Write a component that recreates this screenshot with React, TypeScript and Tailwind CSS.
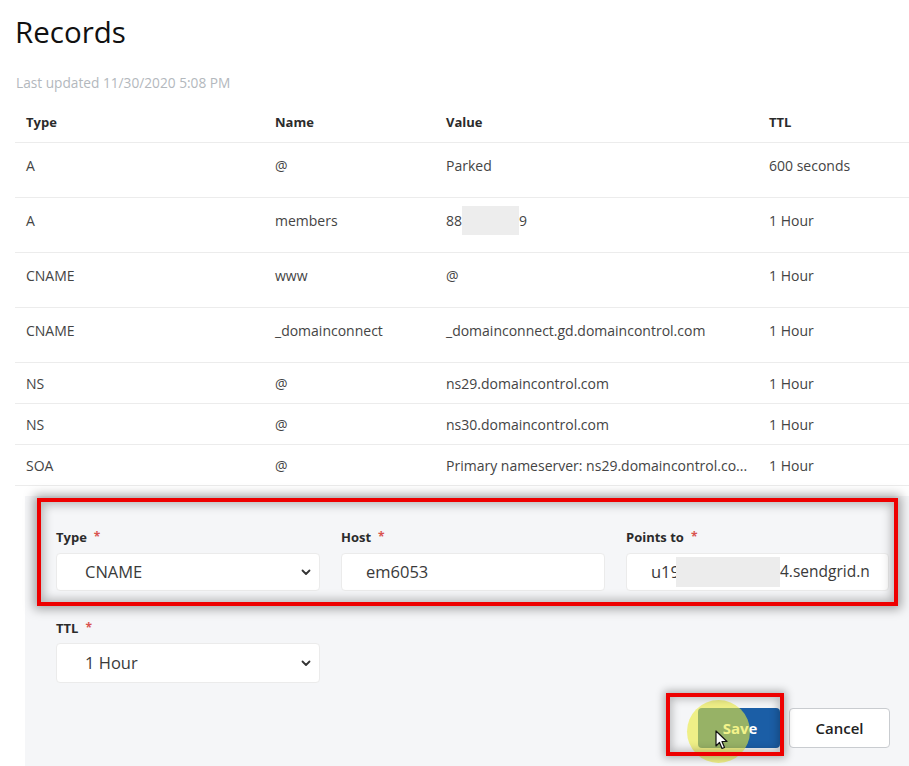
import React from "react";

const font = { fontFamily: '"Open Sans", "Noto Sans", Arial, sans-serif' };

type Row = { type: string; name: string; value: React.ReactNode; ttl: string; tall: boolean };

const rows: Row[] = [
  { type: "A", name: "@", value: "Parked", ttl: "600 seconds", tall: true },
  {
    type: "A",
    name: "members",
    value: (
      <span className="inline-flex items-center">
        88
        <span className="inline-block w-[57px] h-[29px] bg-[#ededed]" />
        9
      </span>
    ),
    ttl: "1 Hour",
    tall: true,
  },
  { type: "CNAME", name: "www", value: "@", ttl: "1 Hour", tall: true },
  { type: "CNAME", name: "_domainconnect", value: "_domainconnect.gd.domaincontrol.com", ttl: "1 Hour", tall: true },
  { type: "NS", name: "@", value: "ns29.domaincontrol.com", ttl: "1 Hour", tall: false },
  { type: "NS", name: "@", value: "ns30.domaincontrol.com", ttl: "1 Hour", tall: false },
  { type: "SOA", name: "@", value: "Primary nameserver: ns29.domaincontrol.co...", ttl: "1 Hour", tall: false },
];

function Chevron() {
  return (
    <svg width="10" height="7" viewBox="0 0 10 7" className="shrink-0">
      <path d="M1.5 1.5 L5 5 L8.5 1.5" fill="none" stroke="#333" strokeWidth="1.8" strokeLinecap="round" strokeLinejoin="round" />
    </svg>
  );
}

function Label({ text }: { text: string }) {
  return (
    <div className="h-4 flex items-center text-[13px] font-bold text-[#2b2b2b] leading-4">
      {text}
      <span className="ml-[7px] text-[#d9534f] text-[12px] font-bold">*</span>
    </div>
  );
}

function Field({ children, select, h = "h-[38px]" }: { children: React.ReactNode; select?: boolean; h?: string }) {
  return (
    <div
      className={
        h +
        " bg-white rounded-[4px] border border-[#ebebeb] flex items-center text-[16.5px] text-[#3a3a3a] " +
        (select ? "pl-[28px] pr-[8px]" : "pl-[24px] pr-[10px]")
      }
    >
      <div className="flex-1 flex items-center whitespace-nowrap">{children}</div>
      {select && <Chevron />}
    </div>
  );
}

export default function App() {
  return (
    <div className="w-[909px] h-[766px] bg-white relative overflow-hidden" style={font}>
      <h1 className="pl-[15px] pt-[12px] text-[29.5px] leading-[40px] text-[#111] font-normal">Records</h1>
      <div className="pl-[16px] mt-[23px] text-[13.7px] leading-4 text-[#b3b8bd]">Last updated 11/30/2020 5:08 PM</div>

      <div className="ml-[15px] mt-[13px]">
        <div className="flex h-[39px] items-center border-b border-[#ececec] text-[13px] font-bold text-[#2b2b2b]">
          <div className="w-[249px] pl-[11px]">Type</div>
          <div className="w-[171px] pl-[11px]">Name</div>
          <div className="w-[323px] pl-[11px]">Value</div>
          <div className="flex-1 pl-[11px]">TTL</div>
        </div>
        {rows.map((r, i) => (
          <div
            key={i}
            className={
              "flex border-b border-[#ececec] text-[14px] text-[#444] " +
              (r.tall ? "h-[55px] items-start pt-[12px]" : "h-[41px] items-center")
            }
          >
            <div className="w-[249px] pl-[11px] h-[20px] flex items-center">{r.type}</div>
            <div className="w-[171px] pl-[11px] h-[20px] flex items-center">{r.name}</div>
            <div className="w-[323px] pl-[11px] h-[20px] flex items-center whitespace-nowrap">{r.value}</div>
            <div className="flex-1 pl-[11px] h-[20px] flex items-center">{r.ttl}</div>
          </div>
        ))}
      </div>

      <div className="ml-[25px] mt-[10px] h-[280px] bg-[#f5f6f8] pl-[31px] pr-[20px] pt-[33px]">
        <div className="grid grid-cols-[264px_264px_263px] gap-x-[21px]">
          <div>
            <Label text="Type" />
            <div className="mt-[8px]">
              <Field select>CNAME</Field>
            </div>
          </div>
          <div>
            <Label text="Host" />
            <div className="mt-[8px]">
              <Field>em6053</Field>
            </div>
          </div>
          <div>
            <Label text="Points to" />
            <div className="mt-[8px]">
              <Field>
                u19
                <span className="relative inline-block shrink-0 w-[104px] h-[30px] bg-[#ececec] ml-[-4px]" />
                <span className="text-[15.5px]">4.sendgrid.n</span>
              </Field>
            </div>
          </div>
        </div>
        <div className="mt-[29px] w-[264px]">
          <Label text="TTL" />
          <div className="mt-[7px]">
            <Field select h="h-[40px]">1 Hour</Field>
          </div>
        </div>
        <div className="flex justify-end gap-[9px] mt-[25px]">
          <button className="w-[82px] h-[40px] rounded-[4px] bg-[#1b5ea6] text-white text-[15px] font-bold flex items-center justify-center pl-[2px]">
            Save
          </button>
          <button className="w-[101px] h-[40px] rounded-[4px] bg-white border border-[#c9ccd0] text-[#222] text-[15px] font-semibold flex items-center justify-center mr-[-1px]">
            Cancel
          </button>
        </div>
      </div>

      {/* annotations */}
      <div className="absolute left-[37px] top-[498px] w-[861px] h-[108px] border-[4px] border-[#ee0000] shadow-[0_0_10px_3px_rgba(0,0,0,0.35),inset_0_0_10px_3px_rgba(0,0,0,0.25)] pointer-events-none" />
      <div className="absolute left-[687px] top-[700px] w-[63px] h-[63px] rounded-full bg-[rgba(235,235,60,0.6)] pointer-events-none" />
      <div className="absolute left-[666px] top-[693px] w-[118px] h-[63px] border-[4px] border-[#ee0000] shadow-[0_0_8px_2px_rgba(0,0,0,0.3),inset_0_0_8px_2px_rgba(0,0,0,0.25)] pointer-events-none" />
      <svg className="absolute left-[715px] top-[730px] pointer-events-none" width="14" height="21" viewBox="0 0 14 21">
        <path d="M1 1 L1 16 L4.5 12.5 L7 18.5 L9.5 17.5 L7 11.5 L12 11.5 Z" fill="#fff" stroke="#111" strokeWidth="1.2" strokeLinejoin="round" />
      </svg>
    </div>
  );
}
